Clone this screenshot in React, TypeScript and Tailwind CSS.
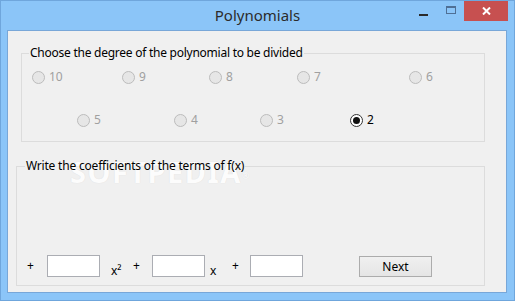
import React from "react";

const FONT = "font-['Segoe_UI','Noto_Sans',sans-serif]";

function Radio({ label, checked, w }: { label: string; checked?: boolean; w?: string }) {
  return (
    <div className={`flex items-center h-[16px] ${w ?? ""}`}>
      {checked ? (
        <span className="w-[13px] h-[13px] rounded-full border border-[#333] bg-white flex items-center justify-center">
          <span className="w-[7px] h-[7px] rounded-full bg-[#111]" />
        </span>
      ) : (
        <span className="w-[13px] h-[13px] rounded-full border border-[#bcbcbc] bg-[#e6e6e6]" />
      )}
      <span className={`ml-[4px] text-[12px] leading-[16px] ${checked ? "text-black" : "text-[#a0a0a0]"}`}>{label}</span>
    </div>
  );
}

export default function App() {
  return (
    <div className={`w-[515px] h-[301px] bg-[#8bc5f8] border border-[#6fa6dc] flex flex-col ${FONT}`}>
      {/* title bar */}
      <div className="h-[29px] grid grid-cols-[1fr_auto_1fr]">
        <div />
        <div className="text-[15px] leading-[29px] text-[#2b2b2b]">Polynomials</div>
        <div className="flex justify-end items-start pr-[6px]">
          <div className="w-[27px] h-[21px] flex items-center justify-center">
            <span className="w-[9px] h-[2px] bg-[#2a2a2a] mt-[6px]" />
          </div>
          <div className="w-[27px] h-[21px] flex items-center justify-center">
            <span className="w-[10px] h-[8px] border border-[#4f6f95] border-t-2 -mt-[4px]" />
          </div>
          <div className="w-[44px] h-[20px] bg-[#c75050] flex items-center justify-center">
            <svg width="9" height="8" viewBox="0 0 9 8">
              <path d="M1 0.5 L8 7.5 M8 0.5 L1 7.5" stroke="white" strokeWidth="2" />
            </svg>
          </div>
        </div>
      </div>
      {/* client area */}
      <div className="ml-[6px] w-[500px] h-[263px] border border-[#78a7d8] bg-[#f0f0f0] relative text-[12px]">
        <span className="absolute left-[62px] top-[119px] text-[29px] font-bold tracking-[1.5px] text-white [text-shadow:0_0_1px_rgba(0,0,0,0.12)] pointer-events-none opacity-80">
          SOFTPEDIA<sup className="text-[9px]">®</sup>
        </span>
        <fieldset className="relative ml-[13px] mt-[14px] w-[464px] border border-[#dcdcdc] pb-[13px]">
          <legend className="ml-[7px] px-[1px] text-[12px] leading-[16px] tracking-[-0.25px] text-black">
            Choose the degree of the polynomial to be divided
          </legend>
          <div className="flex mt-[8px] pl-[10px]">
            <Radio label="10" w="w-[90px]" />
            <Radio label="9" w="w-[87px]" />
            <Radio label="8" w="w-[88px]" />
            <Radio label="7" w="w-[112px]" />
            <Radio label="6" />
          </div>
          <div className="flex mt-[27px] pl-[55px]">
            <Radio label="5" w="w-[97px]" />
            <Radio label="4" w="w-[86px]" />
            <Radio label="3" w="w-[90px]" />
            <Radio label="2" checked />
          </div>
        </fieldset>
        <fieldset className="relative ml-[8px] mt-[16px] w-[469px] border border-[#dcdcdc] pb-[8px]">
          <legend className="ml-[8px] px-[1px] text-[12px] leading-[16px] tracking-[-0.2px] text-black">
            Write the coefficients of the terms of f(x)
          </legend>
          <div className="flex items-start mt-[81px] pl-[9px] text-black">
            <span className="w-[21px] leading-[22px] pl-[1px]">+</span>
            <span className="w-[53px] h-[22px] border border-[#abadb3] bg-white" />
            <span className="w-[33px] pl-[11px] pt-[9px] leading-[13px] text-[12px]">x²</span>
            <span className="w-[19px] leading-[22px]">+</span>
            <span className="w-[53px] h-[22px] border border-[#abadb3] bg-white" />
            <span className="w-[27px] pl-[5px] pt-[9px] leading-[13px]">x</span>
            <span className="w-[18px] leading-[22px]">+</span>
            <span className="w-[53px] h-[22px] border border-[#abadb3] bg-white" />
            <button className="ml-[56px] mt-[1px] w-[73px] h-[21px] border border-[#acacac] bg-gradient-to-b from-[#f0f0f0] to-[#e5e5e5] text-[12px] leading-[19px] text-black">
              Next
            </button>
          </div>
        </fieldset>
      </div>
    </div>
  );
}
